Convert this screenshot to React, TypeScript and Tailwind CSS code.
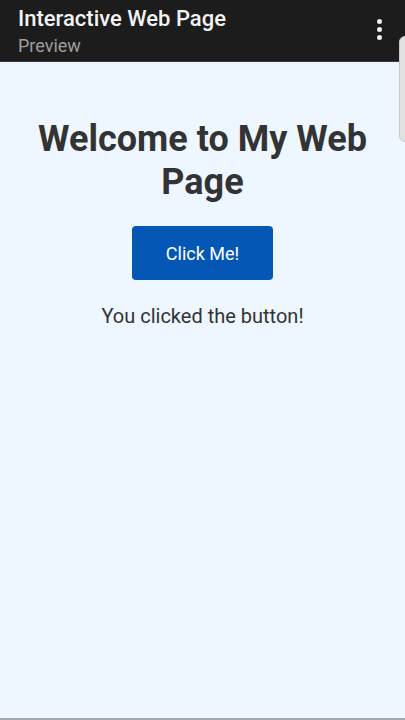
import { useState } from 'react'

export default function App() {
  const [clicked, setClicked] = useState(true)

  return (
    <div className="relative flex min-h-[720px] flex-col bg-[#eef6ff] font-['Roboto',sans-serif]">
      {/* app bar */}
      <div className="flex h-[62px] items-center justify-between border-b border-[#3a3a3a] bg-[#1c1c1c] pl-[18px] pr-[23px]">
        <div className="flex flex-col pt-[2px]">
          <span className="text-[22px] font-medium leading-[26px] text-[#f2f2f2]">Interactive Web Page</span>
          <span className="mt-[2px] text-[18px] leading-[24px] text-[#9e9e9e]">Preview</span>
        </div>
        <div className="mb-[2px] flex flex-col gap-[3px]">
          <span className="h-[5px] w-[5px] rounded-full bg-[#f0f0f0]" />
          <span className="h-[5px] w-[5px] rounded-full bg-[#f0f0f0]" />
          <span className="h-[5px] w-[5px] rounded-full bg-[#f0f0f0]" />
        </div>
      </div>

      <main className="flex flex-1 flex-col items-center px-5 pt-[56px] text-center">
        <h1 className="text-[36px] font-bold leading-[43px] text-[#333333]">Welcome to My Web Page</h1>
        <button
          onClick={() => setClicked(true)}
          className="mt-[22px] h-[54px] w-[141px] rounded-[4px] bg-[#0457b4] text-[18px] text-white"
        >
          Click Me!
        </button>
        {clicked && <p className="mt-[23px] text-[20px] leading-[26px] text-[#333333]">You clicked the button!</p>}
      </main>

      <div className="h-[2px] bg-[#a3a7ab]" />

      {/* edge handle */}
      <div className="absolute right-[-6px] top-[36px] h-[106px] w-[12px] rounded-[6px] border border-[#c8c8c8] bg-[#e2e2e2]" />
    </div>
  )
}
